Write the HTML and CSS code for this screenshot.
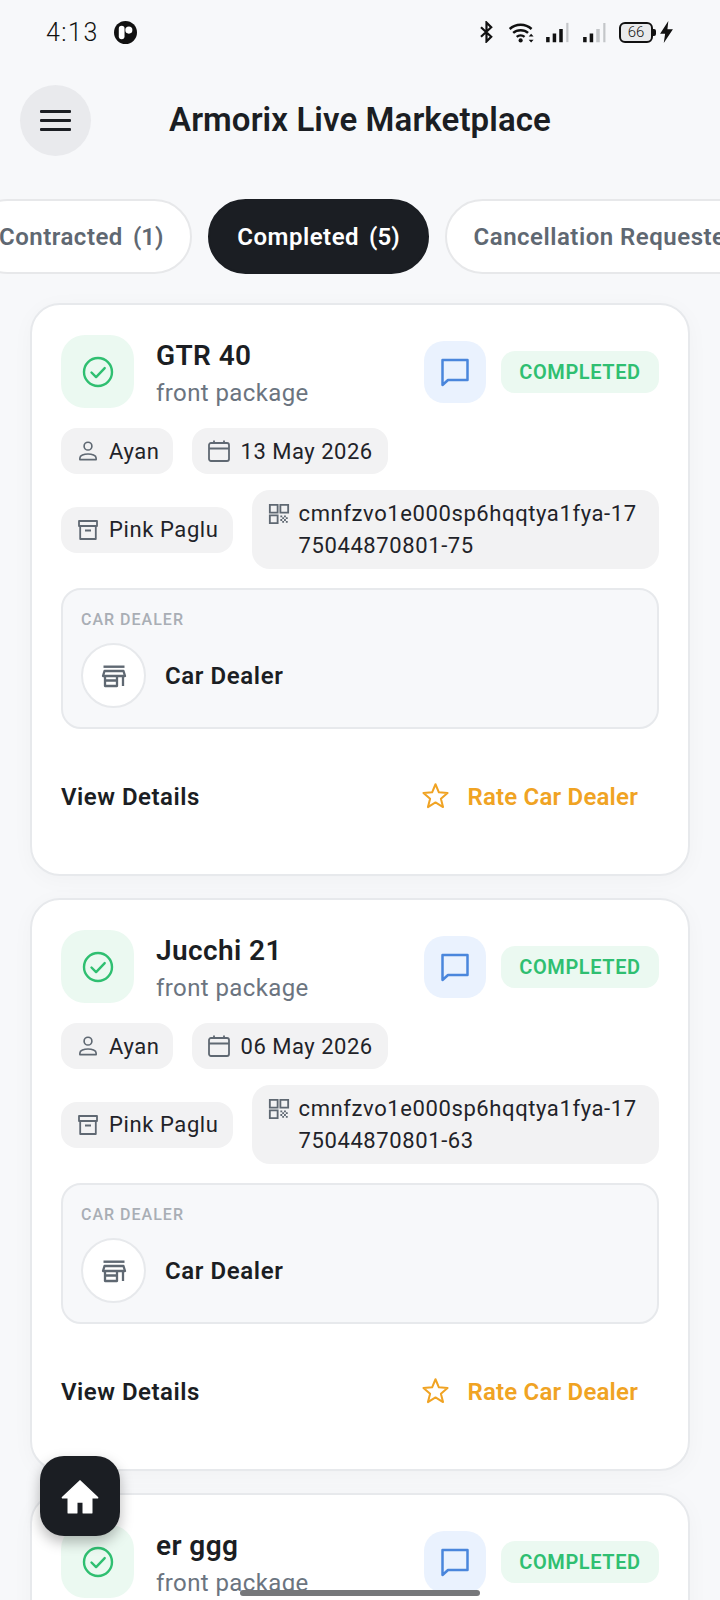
FILE: index.html
```html
<!DOCTYPE html>
<html lang="en">
<head>
<meta charset="utf-8">
<title>Armorix Live Marketplace</title>
<link rel="stylesheet" href="styles.css">
</head>
<body>
<svg class="defs" width="0" height="0" aria-hidden="true">
  <symbol id="i-check" viewBox="0 0 32 32"><circle cx="16" cy="16" r="14" fill="none" stroke="currentColor" stroke-width="2.4"/><path d="M9.5 16.5l4.6 4.6 8.6-9" fill="none" stroke="currentColor" stroke-width="2.4" stroke-linecap="round" stroke-linejoin="round"/></symbol>
  <symbol id="i-chat" viewBox="0 0 32 32"><path d="M3.500 4h25v20H9l-5.500 5z" fill="none" stroke="currentColor" stroke-width="2.500" stroke-linejoin="round"/></symbol>
  <symbol id="i-user" viewBox="0 0 24 24"><circle cx="12" cy="7.500" r="3.600" fill="none" stroke="currentColor" stroke-width="1.500"/><path d="M4.500 20v-1.500c0-2.300 3.800-3.700 7.500-3.700s7.500 1.400 7.500 3.700V20z" fill="none" stroke="currentColor" stroke-width="1.500" stroke-linejoin="round"/></symbol>
  <symbol id="i-cal" viewBox="0 0 24 24"><rect x="2" y="4" width="20" height="18" rx="2" fill="none" stroke="currentColor" stroke-width="1.800"/><path d="M2 9.500h20M7 1.500V5M17 1.500V5" fill="none" stroke="currentColor" stroke-width="1.800"/></symbol>
  <symbol id="i-box" viewBox="0 0 24 24"><path d="M3 3h18v5H3zM4.200 8v13h15.600V8M9 12.500h6" fill="none" stroke="currentColor" stroke-width="1.800" stroke-linejoin="round"/></symbol>
  <symbol id="i-qr" viewBox="0 0 24 24"><path d="M2 2h8.500v8.500H2zM13.500 2H22v8.500h-8.500zM2 13.500h8.500V22H2z" fill="none" stroke="currentColor" stroke-width="2"/><path d="M13.500 13.500h2v2h-2zM17.500 13.500h2v2h-2zM15.500 15.500h2v2h-2zM19.500 15.500h2v2h-2zM13.500 17.500h2v2h-2zM17.500 17.500h2v2h-2zM15.500 19.500h2v2h-2zM19.500 19.500h2v2h-2z" fill="currentColor"/></symbol>
  <symbol id="i-store" viewBox="0 0 26 24"><path d="M2.500 1.500h21v2.400h-21z" fill="currentColor"/><path d="M3.500 7h19l1.500 5H2zM4 12v10h12v-10M4 16.500h12M22 12v10" fill="none" stroke="currentColor" stroke-width="2.300" stroke-linejoin="round"/></symbol>
  <symbol id="i-star" viewBox="0 0 24 24"><path d="M12 2l3 7.200 7.700.6-5.900 5 1.900 7.500L12 18.200l-6.700 4.100 1.900-7.500-5.900-5L9 9.200z" fill="none" stroke="currentColor" stroke-width="1.800" stroke-linejoin="round"/></symbol>
</svg>

<div class="phone">
  <div class="status">
    <div class="status-left">
      <span class="time">4:13</span>
      <svg class="app-dot" viewBox="0 0 24 24"><circle cx="12" cy="12" r="12" fill="#111"/><rect x="5" y="5" width="6" height="14" rx="3" fill="#fff"/><circle cx="15.500" cy="9.500" r="3.700" fill="#fff"/></svg>
    </div>
    <div class="status-right">
      <svg class="s-bt" viewBox="0 0 20 28"><path d="M3 8l13 12-6 6V2l6 6L3 20" fill="none" stroke="#111" stroke-width="2.800"/></svg>
      <svg class="s-wifi" viewBox="0 0 30 24"><path d="M1.500 8c7-6.500 18-6.500 25 0M5.500 12.500c4.500-4 12.500-4 17 0M9.500 17c2.500-2 6.500-2 9 0" fill="none" stroke="#111" stroke-width="2.800"/><circle cx="14" cy="21" r="2.400" fill="#111"/><path d="M26 13.500l2.800 3.200h-5.600zM26 23.500l2.800-3.200h-5.600z" fill="#111"/></svg>
      <svg class="s-sig" viewBox="0 0 28 24"><path d="M1 17h4v6H1zM8.500 13h4v10h-4zM16 8h4v15h-4z" fill="#111"/><path d="M24 1h2.500v22H24z" fill="#c4c6c9"/></svg>
      <svg class="s-sig" viewBox="0 0 28 24"><path d="M1 17h4v6H1zM8.500 13h4v10h-4z" fill="#111"/><path d="M16 8h4v15h-4zM24 1h2.500v22H24z" fill="#c4c6c9"/></svg>
      <div class="battery"><span class="battery-num">66</span></div>
      <svg class="s-bolt" viewBox="0 0 14 24"><path d="M9 0L0 14h5.500L4 24l10-15H8z" fill="#111"/></svg>
    </div>
  </div>

  <header class="topbar">
    <button class="menu" aria-label="Menu">
      <span class="menu-line"></span><span class="menu-line"></span><span class="menu-line"></span>
    </button>
    <h1 class="title">Armorix Live Marketplace</h1>
  </header>

  <nav class="tabs">
    <span class="tab tab-first">Contracted <span class="count">(1)</span></span>
    <span class="tab tab-active">Completed <span class="count">(5)</span></span>
    <span class="tab tab-last">Cancellation Requested</span>
  </nav>

  <main class="list">
    <article class="card">
      <div class="card-top">
        <div class="state-icon"><svg class="ic-check"><use href="#i-check"/></svg></div>
        <div class="card-names">
          <div class="card-title">GTR 40</div>
          <div class="card-sub">front package</div>
        </div>
        <div class="chat"><svg class="ic-chat"><use href="#i-chat"/></svg></div>
        <div class="badge">COMPLETED</div>
      </div>
      <div class="chips">
        <span class="chip chip-user"><svg class="ic-user"><use href="#i-user"/></svg>Ayan</span>
        <span class="chip chip-date"><svg class="ic-chip"><use href="#i-cal"/></svg>13 May 2026</span>
      </div>
      <div class="chips chips-mid">
        <span class="chip chip-shop"><svg class="ic-chip"><use href="#i-box"/></svg>Pink Paglu</span>
        <span class="chip chip-code"><svg class="ic-qr"><use href="#i-qr"/></svg><span class="code-text">cmnfzvo1e000sp6hqqtya1fya-1775044870801-75</span></span>
      </div>
      <div class="dealer">
        <div class="dealer-label">CAR DEALER</div>
        <div class="dealer-row">
          <div class="dealer-avatar"><svg class="ic-store"><use href="#i-store"/></svg></div>
          <div class="dealer-name">Car Dealer</div>
        </div>
      </div>
      <div class="actions">
        <span class="view">View Details</span>
        <span class="rate"><svg class="ic-star"><use href="#i-star"/></svg>Rate Car Dealer</span>
      </div>
    </article>

    <article class="card">
      <div class="card-top">
        <div class="state-icon"><svg class="ic-check"><use href="#i-check"/></svg></div>
        <div class="card-names">
          <div class="card-title">Jucchi 21</div>
          <div class="card-sub">front package</div>
        </div>
        <div class="chat"><svg class="ic-chat"><use href="#i-chat"/></svg></div>
        <div class="badge">COMPLETED</div>
      </div>
      <div class="chips">
        <span class="chip chip-user"><svg class="ic-user"><use href="#i-user"/></svg>Ayan</span>
        <span class="chip chip-date"><svg class="ic-chip"><use href="#i-cal"/></svg>06 May 2026</span>
      </div>
      <div class="chips chips-mid">
        <span class="chip chip-shop"><svg class="ic-chip"><use href="#i-box"/></svg>Pink Paglu</span>
        <span class="chip chip-code"><svg class="ic-qr"><use href="#i-qr"/></svg><span class="code-text">cmnfzvo1e000sp6hqqtya1fya-1775044870801-63</span></span>
      </div>
      <div class="dealer">
        <div class="dealer-label">CAR DEALER</div>
        <div class="dealer-row">
          <div class="dealer-avatar"><svg class="ic-store"><use href="#i-store"/></svg></div>
          <div class="dealer-name">Car Dealer</div>
        </div>
      </div>
      <div class="actions">
        <span class="view">View Details</span>
        <span class="rate"><svg class="ic-star"><use href="#i-star"/></svg>Rate Car Dealer</span>
      </div>
    </article>

    <article class="card">
      <div class="card-top">
        <div class="state-icon"><svg class="ic-check"><use href="#i-check"/></svg></div>
        <div class="card-names">
          <div class="card-title">er ggg</div>
          <div class="card-sub">front package</div>
        </div>
        <div class="chat"><svg class="ic-chat"><use href="#i-chat"/></svg></div>
        <div class="badge">COMPLETED</div>
      </div>
    </article>
  </main>

  <button class="home" aria-label="Home">
    <svg class="ic-home" viewBox="0 0 24 24"><path d="M12 3L1.500 13H5v9h5v-6.500h4V22h5v-9h3.500z" fill="#fff" stroke="#fff" stroke-linejoin="round"/></svg>
  </button>
  <div class="home-bar"></div>
</div>
</body>
</html>
```

FILE: styles.css
```css
* { box-sizing: border-box; }
html, body { margin: 0; padding: 0; }
body {
  background: #f7f8fa;
  font-family: Roboto, "Liberation Sans", sans-serif;
  color: #1b1e23;
}
.defs { position: absolute; }
.phone {
  position: relative;
  width: 720px;
  height: 1600px;
  overflow: hidden;
}

/* status bar */
.status {
  height: 60px;
  padding: 4px 47px 0 46px;
  display: flex;
  align-items: center;
  justify-content: space-between;
}
.status-left { display: flex; align-items: center; gap: 15px; }
.time { font-family: Roboto, sans-serif; font-weight: 300; font-size: 25px; letter-spacing: 1.5px; color: #111; }
.app-dot { width: 23px; height: 23px; }
.status-right { display: flex; align-items: center; }
.s-bt { width: 17px; height: 22px; margin-right: 13px; }
.s-wifi { width: 27px; height: 21px; margin-right: 10px; }
.s-sig { width: 25px; height: 21px; margin-right: 12px; }
.battery {
  width: 34px;
  height: 21px;
  border: 2px solid #111;
  border-radius: 6px;
  background: #e9eaec;
  display: flex;
  align-items: center;
  justify-content: center;
  position: relative;
}
.battery::after {
  content: "";
  position: absolute;
  right: -5px;
  top: 5px;
  width: 3px;
  height: 7px;
  background: #111;
  border-radius: 0 2px 2px 0;
}
.battery-num { font-family: Roboto, sans-serif; font-weight: 300; font-size: 15px; color: #111; }
.s-bolt { width: 13px; height: 22px; margin-left: 7px; }

/* header */
.topbar {
  height: 139px;
  padding: 25px 0 0 20px;
  display: flex;
  align-items: flex-start;
}
.menu {
  width: 71px;
  height: 71px;
  border: 0;
  border-radius: 50%;
  background: #e9eaed;
  display: flex;
  flex-direction: column;
  align-items: center;
  justify-content: center;
  gap: 6px;
  padding: 0;
}
.menu-line { width: 31px; height: 3px; background: #1b1e23; border-radius: 1px; }
.title {
  margin: -1px 0 0 78px;
  font-size: 33px;
  line-height: 71px;
  font-weight: 600;
  letter-spacing: 0.1px;
  color: #1b1e23;
  white-space: nowrap;
}

/* tabs */
.tabs {
  display: flex;
  gap: 16px;
  height: 75px;
  margin-left: -30px;
  white-space: nowrap;
}
.tab {
  display: flex;
  align-items: center;
  gap: 10px;
  height: 75px;
  padding: 0 27px;
  border-radius: 38px;
  background: #fff;
  border: 2px solid #e7e8ea;
  color: #5f6872;
  font-size: 24px;
  font-weight: 600;
  letter-spacing: 0.5px;
  flex: none;
}
.tab-active { background: #1b1e23; border-color: #1b1e23; color: #fff; }
.count { font-weight: 600; letter-spacing: 0; }

/* cards */
.list {
  margin-top: 29px;
  padding: 0 30px;
  display: flex;
  flex-direction: column;
  gap: 22px;
}
.card {
  background: #fff;
  border: 2px solid #e7e9ec;
  border-radius: 30px;
  padding: 30px 29px 0;
  height: 573px;
  box-shadow: 0 4px 22px rgba(20, 25, 35, 0.03);
  flex: none;
}
.card-top { display: flex; align-items: flex-start; }
.state-icon {
  width: 73px;
  height: 73px;
  border-radius: 24px;
  background: #ebf9f1;
  color: #2fbf71;
  display: flex;
  align-items: center;
  justify-content: center;
  flex: none;
}
.ic-check { width: 32px; height: 32px; }
.card-names { margin-left: 22px; flex: 1; min-width: 0; padding-top: 2px; }
.card-title { font-size: 28px; line-height: 38px; font-weight: 600; letter-spacing: 0.4px; color: #1b1e23; }
.card-sub { font-size: 24px; line-height: 36px; letter-spacing: 0.4px; color: #6b7480; }
.chat {
  width: 62px;
  height: 62px;
  margin-top: 6px;
  border-radius: 20px;
  background: #eaf2fe;
  color: #4a86dc;
  display: flex;
  align-items: center;
  justify-content: center;
  flex: none;
}
.ic-chat { width: 32px; height: 32px; }
.badge {
  margin: 16px 0 0 15px;
  height: 42px;
  width: 158px;
  border-radius: 14px;
  background: #ebf9f1;
  color: #2fbf71;
  font-size: 20px;
  font-weight: 600;
  letter-spacing: 0.6px;
  display: flex;
  align-items: center;
  justify-content: center;
  flex: none;
}
.chips { display: flex; align-items: center; gap: 19px; margin-top: 17px; }
.chips-mid { margin-top: 16px; }
.chip {
  display: inline-flex;
  align-items: center;
  gap: 9px;
  min-height: 46px;
  padding: 0 15px;
  border-radius: 16px;
  background: #f2f2f3;
  font-size: 22px;
  letter-spacing: 0.6px;
  color: #1f2329;
  white-space: nowrap;
}
.chip-user { gap: 8px; padding: 0 13px 0 14px; }
.chip-date { gap: 10px; letter-spacing: 0.5px; }
.chip-shop { padding-right: 14px; }
.ic-chip { width: 24px; height: 24px; color: #5f6872; flex: none; }
.ic-user { width: 26px; height: 26px; color: #5f6872; flex: none; }
.ic-qr { width: 22px; height: 22px; color: #5f6872; flex: none; margin-top: -32px; }
.chip-code {
  flex: 1;
  min-width: 0;
  padding: 7px 20px 7px 16px;
  min-height: 79px;
  border-radius: 18px;
  white-space: normal;
}
.code-text { line-height: 32px; word-break: break-all; }
.dealer {
  margin-top: 19px;
  height: 141px;
  border: 2px solid #e7e9ec;
  border-radius: 20px;
  background: #f7f8fa;
  padding: 20px 18px 0;
}
.dealer-label { font-size: 16px; line-height: 20px; font-weight: 500; letter-spacing: 1px; color: #a9aeb5; }
.dealer-row { display: flex; align-items: center; gap: 19px; margin-top: 13px; }
.dealer-avatar {
  width: 65px;
  height: 65px;
  border-radius: 50%;
  background: #fff;
  border: 2px solid #e7e9ec;
  color: #5f6872;
  display: flex;
  align-items: center;
  justify-content: center;
  flex: none;
}
.ic-store { width: 26px; height: 24px; }
.dealer-name { font-size: 24px; font-weight: 600; letter-spacing: 0.6px; color: #1b1e23; }
.actions {
  display: flex;
  align-items: center;
  justify-content: space-between;
  height: 56px;
  margin-top: 40px;
  padding-right: 21px;
}
.view { font-size: 24px; font-weight: 600; letter-spacing: 0.5px; color: #1b1e23; }
.rate { display: inline-flex; align-items: center; gap: 19px; font-size: 24px; font-weight: 600; letter-spacing: 0.2px; color: #f0a323; }
.ic-star { width: 27px; height: 27px; margin-top: -3px; }

/* overlays */
.home {
  position: absolute;
  left: 40px;
  top: 1456px;
  width: 80px;
  height: 80px;
  border: 0;
  padding: 0;
  border-radius: 24px;
  background: #1b1e23;
  box-shadow: 0 6px 14px rgba(0, 0, 0, 0.28);
  display: flex;
  align-items: center;
  justify-content: center;
}
.ic-home { width: 40px; height: 40px; }
.home-bar {
  position: absolute;
  left: 240px;
  top: 1590px;
  width: 240px;
  height: 6px;
  border-radius: 3px;
  background: #76777a;
}
```
